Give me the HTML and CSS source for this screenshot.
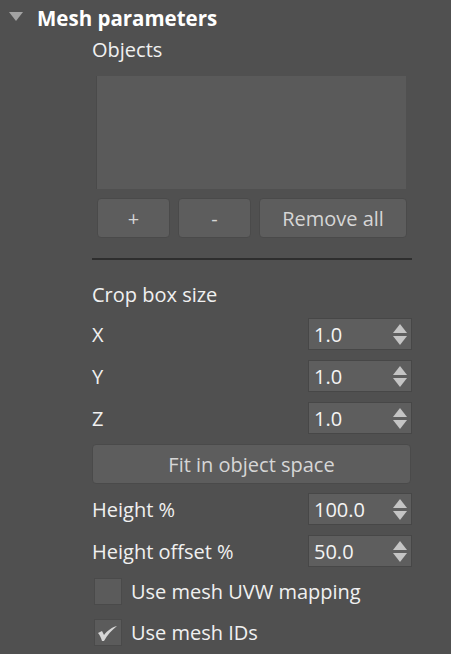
FILE: index.html
```html
<!DOCTYPE html>
<html>
<head>
<meta charset="utf-8">
<link rel="stylesheet" href="styles.css">
</head>
<body>
<div class="rollout">
  <div class="header">
    <svg class="tri" width="14" height="9" viewBox="0 0 14 9"><polygon points="0,0 14,0 7,9" fill="#a3a3a3"/></svg>
    <span class="title">Mesh parameters</span>
  </div>
  <div class="content">
    <div class="label objects">Objects</div>
    <div class="listbox"></div>
    <div class="btnrow">
      <div class="btn small">+</div>
      <div class="btn small">-</div>
      <div class="btn wide">Remove all</div>
    </div>
    <div class="sep"></div>
    <div class="label section">Crop box size</div>
    <div class="row first">
      <span class="label">X</span>
      <div class="spinner"><span class="val">1.0</span><span class="arrows"><svg width="14" height="21" viewBox="0 0 14 21"><polygon points="7,0 14,9 0,9" fill="#c4c4c4"/><polygon points="0,12 14,12 7,21" fill="#c4c4c4"/></svg></span></div>
    </div>
    <div class="row">
      <span class="label">Y</span>
      <div class="spinner"><span class="val">1.0</span><span class="arrows"><svg width="14" height="21" viewBox="0 0 14 21"><polygon points="7,0 14,9 0,9" fill="#c4c4c4"/><polygon points="0,12 14,12 7,21" fill="#c4c4c4"/></svg></span></div>
    </div>
    <div class="row">
      <span class="label">Z</span>
      <div class="spinner"><span class="val">1.0</span><span class="arrows"><svg width="14" height="21" viewBox="0 0 14 21"><polygon points="7,0 14,9 0,9" fill="#c4c4c4"/><polygon points="0,12 14,12 7,21" fill="#c4c4c4"/></svg></span></div>
    </div>
    <div class="btn fit">Fit in object space</div>
    <div class="row h1">
      <span class="label">Height %</span>
      <div class="spinner"><span class="val">100.0</span><span class="arrows"><svg width="14" height="21" viewBox="0 0 14 21"><polygon points="7,0 14,9 0,9" fill="#c4c4c4"/><polygon points="0,12 14,12 7,21" fill="#c4c4c4"/></svg></span></div>
    </div>
    <div class="row">
      <span class="label">Height offset %</span>
      <div class="spinner"><span class="val">50.0</span><span class="arrows"><svg width="14" height="21" viewBox="0 0 14 21"><polygon points="7,0 14,9 0,9" fill="#c4c4c4"/><polygon points="0,12 14,12 7,21" fill="#c4c4c4"/></svg></span></div>
    </div>
    <div class="check c1">
      <span class="box"></span>
      <span class="label">Use mesh UVW mapping</span>
    </div>
    <div class="check c2">
      <span class="box"><svg width="26" height="25" viewBox="0 0 26 25"><path d="M3,13 L7,11 L9,15 C12,11 17,7 22,6 C17,10 12,15 9,21 L7,21 C6,18 5,15 3,13 Z" fill="#d6d6d6"/></svg></span>
      <span class="label">Use mesh IDs</span>
    </div>
  </div>
</div>
</body>
</html>
```

FILE: styles.css
```css
html, body {
  margin: 0;
  padding: 0;
  background: #505050;
}
body {
  width: 451px;
  height: 654px;
  overflow: hidden;
  font-family: "Open Sans", "DejaVu Sans", sans-serif;
  font-size: 20px;
  color: #f2f2f2;
}
.header {
  height: 36px;
  display: flex;
  align-items: center;
}
.tri {
  margin-left: 9px;
  margin-top: -3px;
}
.title {
  margin-left: 14px;
  font-weight: bold;
  font-size: 20.5px;
  color: #ffffff;
  margin-top: -1px;
}
.content {
  padding-left: 92px;
  width: 320px;
  display: flex;
  flex-direction: column;
}
.label {
  color: #f0f0f0;
}
.objects {
  height: 28px;
  line-height: 28px;
}
.listbox {
  margin-top: 12px;
  margin-left: 4px;
  width: 310px;
  height: 113px;
  background: #5a5a5a;
  border-left: 1px solid #4a4a4a;
  box-sizing: border-box;
}
.btnrow {
  margin-top: 9px;
  margin-left: 5px;
  display: flex;
  gap: 8px;
}
.btn {
  height: 40px;
  box-sizing: border-box;
  background: #5d5d5d;
  border: 1px solid #4a4a4a;
  border-radius: 4px;
  display: flex;
  align-items: center;
  justify-content: center;
  color: #d6d6d6;
}
.small {
  width: 73px;
}
.wide {
  width: 148px;
}
.sep {
  margin-top: 20px;
  height: 2px;
  width: 320px;
  background: #2e2e2e;
}
.section {
  margin-top: 20px;
  height: 30px;
  line-height: 30px;
}
.row {
  margin-top: 10px;
  height: 32px;
  display: flex;
  align-items: center;
  justify-content: space-between;
}
.row.first {
  margin-top: 8px;
}
.spinner {
  width: 104px;
  height: 32px;
  box-sizing: border-box;
  background: #5e5e5e;
  border: 1px solid #474747;
  display: flex;
  align-items: center;
  justify-content: space-between;
  padding-left: 5px;
  padding-right: 4px;
  color: #f4f4f4;
}
.arrows {
  display: flex;
  align-items: center;
}
.arrows svg {
  display: block;
}
.fit {
  margin-top: 10px;
  width: 319px;
}
.h1 {
  margin-top: 9px;
}
.check {
  display: flex;
  align-items: center;
  height: 27px;
}
.c1 {
  margin-top: 11px;
}
.c2 {
  margin-top: 14px;
}
.box {
  margin-left: 2px;
  width: 28px;
  height: 27px;
  box-sizing: border-box;
  background: #5b5b5b;
  border: 1px solid #4a4a4a;
  display: flex;
  align-items: center;
  justify-content: center;
}
.box svg {
  display: block;
}
.check .label {
  margin-left: 9px;
}
```
